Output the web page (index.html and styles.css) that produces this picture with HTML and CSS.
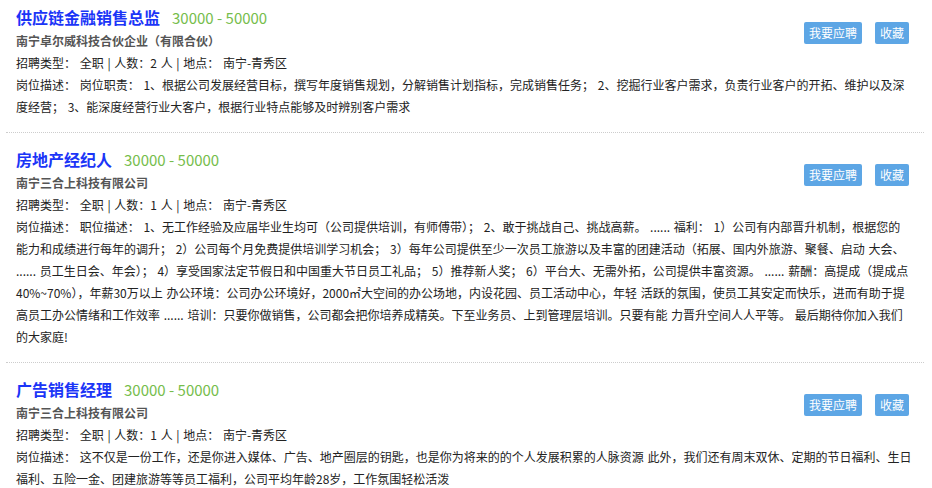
FILE: index.html
```html
<!DOCTYPE html>
<html lang="zh-CN">
<head>
<meta charset="utf-8">
<title>职位列表</title>
<link rel="stylesheet" href="styles.css">
</head>
<body>
<div class="job-list">
  <div class="job">
    <div class="job-top">
      <div class="job-info">
        <div class="job-title"><a class="job-name">供应链金融销售总监</a><span class="job-salary">30000 - 50000</span></div>
        <div class="job-company">南宁卓尔威科技合伙企业（有限合伙）</div>
        <div class="job-meta">招聘类型： 全职 | 人数：2 人 | 地点： 南宁-青秀区</div>
      </div>
      <div class="job-actions">
        <span class="btn">我要应聘</span>
        <span class="btn">收藏</span>
      </div>
    </div>
    <div class="job-desc">岗位描述： 岗位职责： 1、根据公司发展经营目标，撰写年度销售规划，分解销售计划指标，完成销售任务； 2、挖掘行业客户需求，负责行业客户的开拓、维护以及深度经营； 3、能深度经营行业大客户，根据行业特点能够及时辨别客户需求</div>
  </div>
  <div class="job">
    <div class="job-top">
      <div class="job-info">
        <div class="job-title"><a class="job-name">房地产经纪人</a><span class="job-salary">30000 - 50000</span></div>
        <div class="job-company">南宁三合上科技有限公司</div>
        <div class="job-meta">招聘类型： 全职 | 人数：1 人 | 地点： 南宁-青秀区</div>
      </div>
      <div class="job-actions">
        <span class="btn">我要应聘</span>
        <span class="btn">收藏</span>
      </div>
    </div>
    <div class="job-desc">岗位描述： 职位描述： 1、无工作经验及应届毕业生均可（公司提供培训，有师傅带）； 2、敢于挑战自己、挑战高薪。 ...... 福利： 1）公司有内部晋升机制，根据您的能力和成绩进行每年的调升； 2）公司每个月免费提供培训学习机会； 3）每年公司提供至少一次员工旅游以及丰富的团建活动（拓展、国内外旅游、聚餐、启动 大会、 ...... 员工生日会、年会）； 4）享受国家法定节假日和中国重大节日员工礼品； 5）推荐新人奖； 6）平台大、无需外拓，公司提供丰富资源。 ...... 薪酬：高提成（提成点40%~70%），年薪30万以上 办公环境：公司办公环境好，2000㎡大空间的办公场地，内设花园、员工活动中心，年轻 活跃的氛围，使员工其安定而快乐，进而有助于提高员工办公情绪和工作效率 ...... 培训：只要你做销售，公司都会把你培养成精英。下至业务员、上到管理层培训。只要有能 力晋升空间人人平等。 最后期待你加入我们的大家庭!</div>
  </div>
  <div class="job">
    <div class="job-top">
      <div class="job-info">
        <div class="job-title"><a class="job-name">广告销售经理</a><span class="job-salary">30000 - 50000</span></div>
        <div class="job-company">南宁三合上科技有限公司</div>
        <div class="job-meta">招聘类型： 全职 | 人数：1 人 | 地点： 南宁-青秀区</div>
      </div>
      <div class="job-actions">
        <span class="btn">我要应聘</span>
        <span class="btn">收藏</span>
      </div>
    </div>
    <div class="job-desc">岗位描述： 这不仅是一份工作，还是你进入媒体、广告、地产圈层的钥匙，也是你为将来的的个人发展积累的人脉资源 此外，我们还有周末双休、定期的节日福利、生日福利、五险一金、团建旅游等等员工福利，公司平均年龄28岁，工作氛围轻松活泼</div>
  </div>
</div>
</body>
</html>
```

FILE: styles.css
```css
html, body {
  margin: 0;
  padding: 0;
  background: #fff;
}

body {
  font-family: "Microsoft YaHei", "Noto Sans CJK SC", sans-serif;
  font-size: 12px;
  color: #222;
  word-spacing: 1px;
  overflow: hidden;
}

.job-list {
  padding: 0 8px 0 6px;
}

.job {
  padding: 14px 12px 14px 10px;
  border-bottom: 1px dotted #cdcdcd;
}

.job:first-child {
  padding-top: 5px;
}

.job-top {
  display: flex;
  justify-content: space-between;
  align-items: flex-start;
}

.job-title {
  line-height: 25px;
  height: 25px;
  white-space: nowrap;
  word-spacing: 0;
}

.job-name {
  font-size: 16px;
  font-weight: bold;
  color: #1b35f7;
}

.job-salary {
  font-size: 15px;
  color: #76bd4c;
  margin-left: 12px;
}

.job-company {
  line-height: 22px;
  font-weight: bold;
  color: #555;
}

.job-meta {
  line-height: 22px;
}

.job-actions {
  display: flex;
  gap: 13px;
  margin-top: 17px;
  margin-right: 3px;
}

.btn {
  display: block;
  height: 22px;
  line-height: 22px;
  padding: 0 5px;
  background: #5da6e5;
  color: #fff;
  border-radius: 2px;
  font-size: 12px;
  white-space: nowrap;
}

.job-desc {
  line-height: 22px;
}
```
